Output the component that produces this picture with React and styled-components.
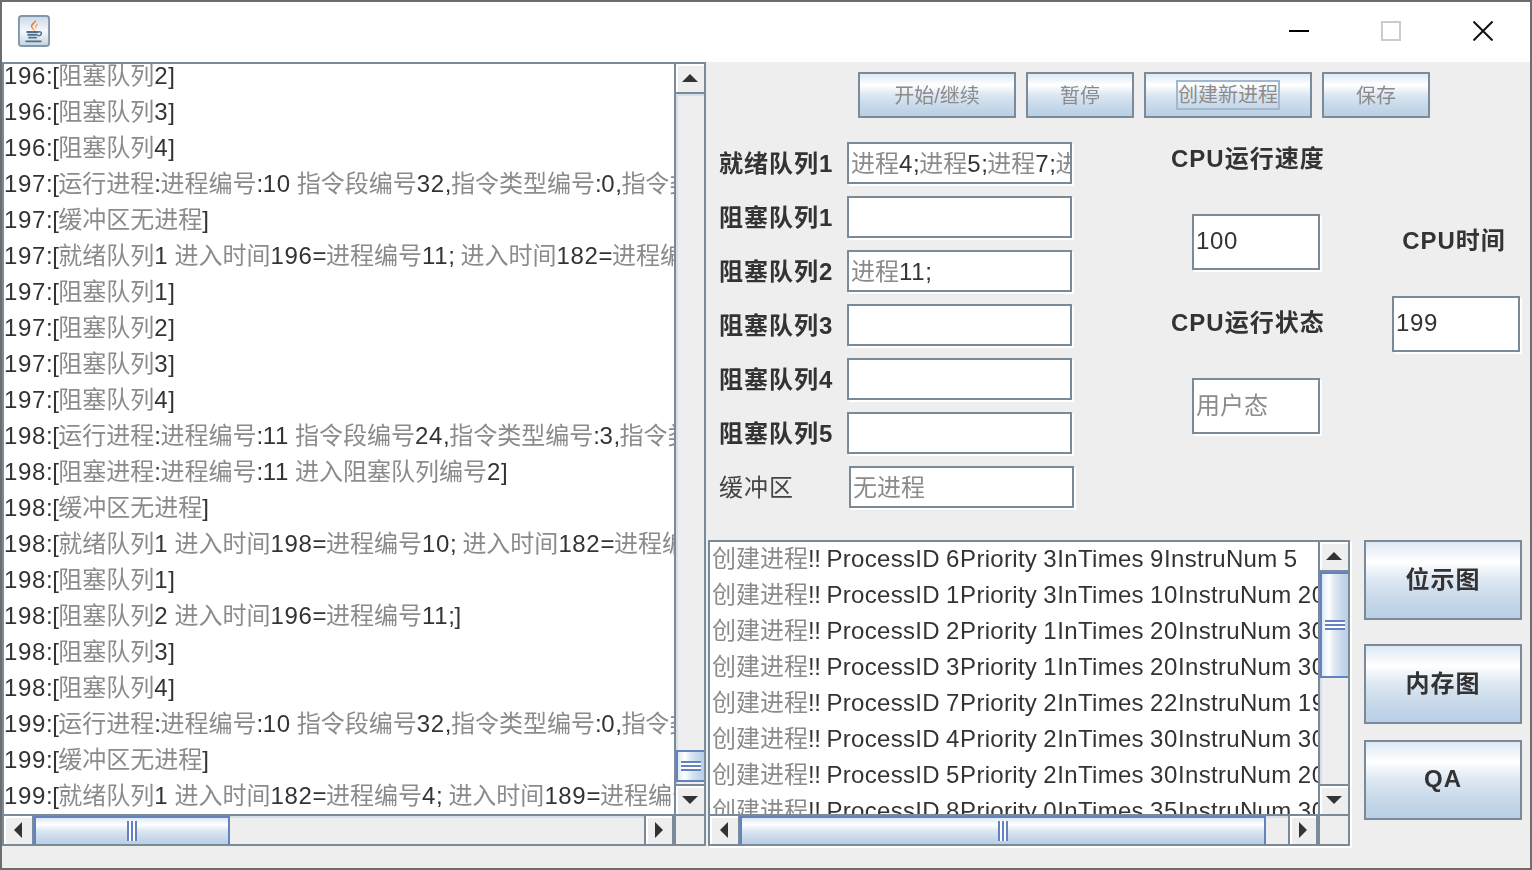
import React from 'react';
import styled, { createGlobalStyle } from 'styled-components';

const GlobalStyle = createGlobalStyle`
  html, body {
    margin: 0;
    padding: 0;
    width: 1532px;
    height: 870px;
    overflow: hidden;
    background: #eeeeee;
  }
`;

const line = '#7a8a99';
const thumbBlue = '#6382bf';
const metalV = 'linear-gradient(180deg, #dde8f3 0%, #ffffff 26%, #dce7f2 50%, #c8d9ea 75%, #b8cfe5 100%)';
const metalH = 'linear-gradient(90deg, #dde8f3 0%, #ffffff 26%, #dce7f2 50%, #c8d9ea 75%, #b8cfe5 100%)';

const Frame = styled.div`
  width: 1532px;
  height: 870px;
  box-sizing: border-box;
  border: 2px solid #6d6d6d;
  background: #eeeeee;
  display: flex;
  flex-direction: column;
  font-family: 'Liberation Sans', 'Noto Sans CJK SC', sans-serif;
  font-size: 24px;
  color: #333333;
  overflow: hidden;
`;

const TitleBar = styled.div`
  height: 60px;
  box-sizing: border-box;
  flex: none;
  background: #ffffff;
  display: flex;
  align-items: center;
  padding: 0 0 3px 16px;
`;

const WindowControls = styled.div`
  margin-left: auto;
  display: flex;
  align-items: center;
  gap: 72px;
  padding-right: 37px;
`;

const Body = styled.div`
  display: flex;
  height: 784px;
  flex: none;
`;

const Pane = styled.div`
  box-sizing: border-box;
  width: ${(p) => p.$width}px;
  height: ${(p) => p.$height}px;
  flex: none;
  border: 2px solid ${line};
  display: grid;
  grid-template-columns: 1fr 30px;
  grid-template-rows: 1fr 30px;
  background: #eeeeee;
  box-shadow: ${(p) => (p.$glow ? '2px 2px 0 #ffffff' : 'none')};
`;

const Viewport = styled.div`
  background: #ffffff;
  overflow: hidden;
  min-width: 0;
  min-height: 0;
`;

const RowList = styled.div`
  margin-top: ${(p) => p.$top}px;
  padding-left: ${(p) => p.$left}px;
  filter: blur(0.35px);
`;

const Row = styled.div`
  height: 36px;
  line-height: 36px;
  white-space: nowrap;
`;

const Cjk = styled.span`
  color: #8b8b8b;
`;

const Digits = styled.span`
  letter-spacing: 0.65px;
`;

const Letters = styled.span`
  letter-spacing: 0.3px;
`;

const Punct = styled.span`
  letter-spacing: -0.5px;
`;

const VBar = styled.div`
  display: flex;
  flex-direction: column;
  border-left: 2px solid ${line};
  min-height: 0;
`;

const HBar = styled.div`
  display: flex;
  border-top: 2px solid ${line};
  min-width: 0;
`;

const Corner = styled.div`
  border-top: 2px solid ${line};
  border-left: 2px solid ${line};
  background: #eeeeee;
`;

const ArrowBox = styled.div`
  flex: none;
  box-sizing: border-box;
  width: ${(p) => (p.$horizontal ? '30px' : 'auto')};
  height: ${(p) => (p.$horizontal ? 'auto' : '30px')};
  display: flex;
  align-items: center;
  justify-content: center;
  background: #eeeeee;
  box-shadow: inset 2px 2px 0 #ffffff;
  border-bottom: ${(p) => (p.$dir === 'up' ? `2px solid ${line}` : 'none')};
  border-top: ${(p) => (p.$dir === 'down' ? `2px solid ${line}` : 'none')};
  border-right: ${(p) => (p.$dir === 'left' || p.$dir === 'right' ? `2px solid ${line}` : 'none')};
  border-left: ${(p) => (p.$dir === 'right' ? `2px solid ${line}` : 'none')};
`;

const triangles = {
  up: 'border-left: 8px solid transparent; border-right: 8px solid transparent; border-bottom: 8px solid #333333;',
  down: 'border-left: 8px solid transparent; border-right: 8px solid transparent; border-top: 8px solid #333333;',
  left: 'border-top: 8px solid transparent; border-bottom: 8px solid transparent; border-right: 8px solid #333333;',
  right: 'border-top: 8px solid transparent; border-bottom: 8px solid transparent; border-left: 8px solid #333333;',
};

const Triangle = styled.div`
  width: 0;
  height: 0;
  ${(p) => triangles[p.$dir]}
`;

const VTrack = styled.div`
  flex: 1;
  min-height: 0;
  padding-top: ${(p) => p.$offset}px;
  background: #eeeeee;
  box-shadow: inset 2px 2px 0 #d5dfe9;
`;

const HTrack = styled.div`
  flex: 1;
  min-width: 0;
  padding-left: ${(p) => p.$offset}px;
  background: #eeeeee;
  box-shadow: inset 2px 2px 0 #d5dfe9;
`;

const VThumb = styled.div`
  box-sizing: border-box;
  height: ${(p) => p.$size}px;
  background: ${metalH};
  border-top: 2px solid ${thumbBlue};
  border-bottom: 2px solid ${thumbBlue};
  border-left: 2px solid ${thumbBlue};
  display: flex;
  align-items: center;
  justify-content: center;
`;

const HThumb = styled.div`
  box-sizing: border-box;
  width: ${(p) => p.$size}px;
  height: 100%;
  background: ${metalV};
  border-left: 2px solid ${thumbBlue};
  border-right: 2px solid ${thumbBlue};
  border-top: 2px solid ${thumbBlue};
  display: flex;
  align-items: center;
  justify-content: center;
`;

const VGrip = styled.div`
  width: 20px;
  height: 10px;
  background: repeating-linear-gradient(180deg, ${thumbBlue} 0 2px, #ffffff 2px 4px);
`;

const HGrip = styled.div`
  width: 10px;
  height: 20px;
  background: repeating-linear-gradient(90deg, ${thumbBlue} 0 2px, #ffffff 2px 4px);
`;

const Right = styled.div`
  flex: 1;
  display: flex;
  flex-direction: column;
  padding-top: 10px;
`;

const ButtonRow = styled.div`
  display: flex;
  gap: 10px;
  margin-left: 152px;
`;

const ActionButton = styled.div`
  box-sizing: border-box;
  width: ${(p) => p.$width}px;
  height: ${(p) => p.$height}px;
  flex: none;
  border: 2px solid ${line};
  background: ${metalV};
  display: flex;
  align-items: center;
  justify-content: center;
  font-size: ${(p) => p.$size || 20}px;
  margin-top: ${(p) => p.$top || 0}px;
`;

const ButtonText = styled.span`
  color: #8b8b8b;
  padding-bottom: 2px;
  filter: blur(0.35px);
`;

const SideText = styled.span`
  color: #333333;
  font-weight: 700;
  letter-spacing: 1px;
  padding-bottom: ${(p) => p.$lift}px;
  filter: blur(0.3px);
`;

const FocusRing = styled.span`
  box-sizing: border-box;
  width: 104px;
  height: 30px;
  line-height: 26px;
  text-align: center;
  border: 2px solid #a3b8cc;
  color: #8b8b8b;
`;

const FormArea = styled.div`
  display: flex;
  margin-top: 24px;
`;

const QueueColumn = styled.div`
  display: flex;
  flex-direction: column;
  gap: 12px;
  padding-left: 13px;
`;

const QueueRow = styled.div`
  display: flex;
  align-items: center;
  height: 42px;
`;

const FieldLabel = styled.div`
  width: 128px;
  flex: none;
  padding-bottom: 4px;
  font-weight: ${(p) => (p.$plain ? 400 : 700)};
  letter-spacing: 1px;
  color: ${(p) => (p.$plain ? '#444444' : '#333333')};
  white-space: nowrap;
  filter: blur(0.3px);
`;

const Field = styled.div`
  box-sizing: border-box;
  flex: none;
  width: ${(p) => p.$width || 225}px;
  height: ${(p) => p.$height || 42}px;
  margin-left: ${(p) => p.$left || 0}px;
  margin-top: ${(p) => p.$top || 0}px;
  border: 2px solid ${line};
  background: #ffffff;
  box-shadow: 2px 2px 0 #ffffff;
  padding-left: 2px;
  line-height: ${(p) => p.$line || 40}px;
  white-space: nowrap;
  overflow: hidden;
`;

const FieldText = styled.span`
  filter: blur(0.3px);
  display: inline-block;
`;

const StatusColumn = styled.div`
  width: 152px;
  margin-left: 97px;
  display: flex;
  flex-direction: column;
  align-items: flex-start;
`;

const StatusLabel = styled.div`
  height: 34px;
  line-height: 34px;
  margin-top: ${(p) => p.$top || 0}px;
  font-weight: 700;
  letter-spacing: 1px;
  white-space: nowrap;
  filter: blur(0.3px);
`;

const TimeColumn = styled.div`
  width: 128px;
  margin-left: 69px;
  padding-top: 82px;
  display: flex;
  flex-direction: column;
  align-items: center;
`;

const TimeLabel = styled(StatusLabel)`
  margin-right: 4px;
`;

const BottomArea = styled.div`
  display: flex;
  margin-top: 32px;
  padding-left: 2px;
`;

const SideButtons = styled.div`
  margin-left: 14px;
  display: flex;
  flex-direction: column;
`;

// the reference is a scaled Swing window: Chinese renders grey, digits run wide, punctuation narrow
const Mixed = ({ text }) =>
  (text.match(/[\u4e00-\u9fff]+|[0-9]+|[\s:;,=!\[\]]+|[A-Za-z]+/g) || []).map((part, i) => {
    if (/[\u4e00-\u9fff]/.test(part)) return <Cjk key={i}>{part}</Cjk>;
    if (/[0-9]/.test(part)) return <Digits key={i}>{part}</Digits>;
    if (/[A-Za-z]/.test(part)) return <Letters key={i}>{part}</Letters>;
    return <Punct key={i}>{part}</Punct>;
  });

const Arrow = ({ dir }) => (
  <ArrowBox $dir={dir} $horizontal={dir === 'left' || dir === 'right'}>
    <Triangle $dir={dir} />
  </ArrowBox>
);

const VScroll = ({ offset, size }) => (
  <VBar>
    <Arrow dir="up" />
    <VTrack $offset={offset}>
      <VThumb $size={size}>
        <VGrip />
      </VThumb>
    </VTrack>
    <Arrow dir="down" />
  </VBar>
);

const HScroll = ({ offset, size }) => (
  <HBar>
    <Arrow dir="left" />
    <HTrack $offset={offset}>
      <HThumb $size={size}>
        <HGrip />
      </HThumb>
    </HTrack>
    <Arrow dir="right" />
  </HBar>
);

const JavaIcon = () => (
  <svg width="32" height="32" viewBox="0 0 34 34">
    <defs>
      <linearGradient id="javaBg" x1="0" y1="0" x2="0" y2="1">
        <stop offset="0" stopColor="#c9d8e6" />
        <stop offset="0.5" stopColor="#f6f8fa" />
        <stop offset="1" stopColor="#c3d3e2" />
      </linearGradient>
    </defs>
    <rect x="1" y="1" width="32" height="32" rx="3" fill="url(#javaBg)" stroke="#7f96ab" strokeWidth="2" />
    <path d="M19 5c2 3-6 5-3 9 1 1 2 2 2 3-3-2-6-5-3-8 1-1 3-2 4-4z" fill="#e8792b" />
    <path d="M21 9c1 2-3 3-1 6-2-1-3-4 1-6z" fill="#f0a060" />
    <path d="M9 18h13M10 21h11M11 24h9M8 28h17" stroke="#4f6f8a" strokeWidth="2" fill="none" />
    <path d="M22 18c4-1 4 4-1 4" stroke="#4f6f8a" strokeWidth="1.5" fill="none" />
  </svg>
);

const MinimizeIcon = () => (
  <svg width="20" height="20" viewBox="0 0 20 20">
    <path d="M0 10h20" stroke="#000000" strokeWidth="2" />
  </svg>
);

const MaximizeIcon = () => (
  <svg width="20" height="20" viewBox="0 0 20 20">
    <rect x="1" y="1" width="18" height="18" fill="none" stroke="#cccccc" strokeWidth="2" />
  </svg>
);

const CloseIcon = () => (
  <svg width="20" height="20" viewBox="0 0 20 20">
    <path d="M0.5 0.5l19 19M19.5 0.5l-19 19" stroke="#111111" strokeWidth="2" />
  </svg>
);

const logRows = [
  '196:[阻塞队列2]',
  '196:[阻塞队列3]',
  '196:[阻塞队列4]',
  '197:[运行进程:进程编号:10 指令段编号32,指令类型编号:0,指令类型',
  '197:[缓冲区无进程]',
  '197:[就绪队列1 进入时间196=进程编号11; 进入时间182=进程编号4;',
  '197:[阻塞队列1]',
  '197:[阻塞队列2]',
  '197:[阻塞队列3]',
  '197:[阻塞队列4]',
  '198:[运行进程:进程编号:11 指令段编号24,指令类型编号:3,指令类型',
  '198:[阻塞进程:进程编号:11 进入阻塞队列编号2]',
  '198:[缓冲区无进程]',
  '198:[就绪队列1 进入时间198=进程编号10; 进入时间182=进程编号4;',
  '198:[阻塞队列1]',
  '198:[阻塞队列2 进入时间196=进程编号11;]',
  '198:[阻塞队列3]',
  '198:[阻塞队列4]',
  '199:[运行进程:进程编号:10 指令段编号32,指令类型编号:0,指令类型',
  '199:[缓冲区无进程]',
  '199:[就绪队列1 进入时间182=进程编号4; 进入时间189=进程编号5;',
];

const processRows = [
  '创建进程!! ProcessID 6Priority 3InTimes 9InstruNum 5',
  '创建进程!! ProcessID 1Priority 3InTimes 10InstruNum 20',
  '创建进程!! ProcessID 2Priority 1InTimes 20InstruNum 30',
  '创建进程!! ProcessID 3Priority 1InTimes 20InstruNum 30',
  '创建进程!! ProcessID 7Priority 2InTimes 22InstruNum 19',
  '创建进程!! ProcessID 4Priority 2InTimes 30InstruNum 30',
  '创建进程!! ProcessID 5Priority 2InTimes 30InstruNum 20',
  '创建进程!! ProcessID 8Priority 0InTimes 35InstruNum 30',
];

const queues = [
  { label: '就绪队列1', value: '进程4;进程5;进程7;进程8;' },
  { label: '阻塞队列1', value: '' },
  { label: '阻塞队列2', value: '进程11;' },
  { label: '阻塞队列3', value: '' },
  { label: '阻塞队列4', value: '' },
  { label: '阻塞队列5', value: '' },
];

export default function App() {
  return (
    <>
      <GlobalStyle />
      <Frame>
        <TitleBar>
          <JavaIcon />
          <WindowControls>
            <MinimizeIcon />
            <MaximizeIcon />
            <CloseIcon />
          </WindowControls>
        </TitleBar>
        <Body>
          <Pane $width={704} $height={784}>
            <Viewport>
              <RowList $top={-6} $left={0}>
                {logRows.map((row, i) => (
                  <Row key={i}>
                    <Mixed text={row} />
                  </Row>
                ))}
              </RowList>
            </Viewport>
            <VScroll offset={656} size={32} />
            <HScroll offset={0} size={196} />
            <Corner />
          </Pane>
          <Right>
            <ButtonRow>
              <ActionButton $width={158} $height={46}>
                <ButtonText>开始/继续</ButtonText>
              </ActionButton>
              <ActionButton $width={108} $height={46}>
                <ButtonText>暂停</ButtonText>
              </ActionButton>
              <ActionButton $width={168} $height={46}>
                <FocusRing>创建新进程</FocusRing>
              </ActionButton>
              <ActionButton $width={108} $height={46}>
                <ButtonText>保存</ButtonText>
              </ActionButton>
            </ButtonRow>
            <FormArea>
              <QueueColumn>
                {queues.map((q) => (
                  <QueueRow key={q.label}>
                    <FieldLabel>{q.label}</FieldLabel>
                    <Field>
                      <FieldText>
                        <Mixed text={q.value} />
                      </FieldText>
                    </Field>
                  </QueueRow>
                ))}
                <QueueRow>
                  <FieldLabel $plain>缓冲区</FieldLabel>
                  <Field $left={2}>
                    <FieldText>
                      <Mixed text="无进程" />
                    </FieldText>
                  </Field>
                </QueueRow>
              </QueueColumn>
              <StatusColumn>
                <StatusLabel>CPU运行速度</StatusLabel>
                <Field $width={128} $height={56} $line={50} $left={21} $top={38}>
                  <FieldText>
                    <Mixed text="100" />
                  </FieldText>
                </Field>
                <StatusLabel $top={36}>CPU运行状态</StatusLabel>
                <Field $width={128} $height={56} $line={52} $left={21} $top={38}>
                  <FieldText>
                    <Mixed text="用户态" />
                  </FieldText>
                </Field>
              </StatusColumn>
              <TimeColumn>
                <TimeLabel>CPU时间</TimeLabel>
                <Field $width={128} $height={56} $line={50} $top={38}>
                  <FieldText>
                    <Mixed text="199" />
                  </FieldText>
                </Field>
              </TimeColumn>
            </FormArea>
            <BottomArea>
              <Pane $width={642} $height={306} $glow>
                <Viewport>
                  <RowList $top={-1} $left={2}>
                    {processRows.map((row, i) => (
                      <Row key={i}>
                        <Mixed text={row} />
                      </Row>
                    ))}
                  </RowList>
                </Viewport>
                <VScroll offset={0} size={106} />
                <HScroll offset={0} size={526} />
                <Corner />
              </Pane>
              <SideButtons>
                <ActionButton $width={158} $height={80} $size={24}>
                  <SideText $lift={6}>位示图</SideText>
                </ActionButton>
                <ActionButton $width={158} $height={80} $size={24} $top={24}>
                  <SideText $lift={6}>内存图</SideText>
                </ActionButton>
                <ActionButton $width={158} $height={80} $size={24} $top={16}>
                  <SideText $lift={2}>QA</SideText>
                </ActionButton>
              </SideButtons>
            </BottomArea>
          </Right>
        </Body>
      </Frame>
    </>
  );
}
